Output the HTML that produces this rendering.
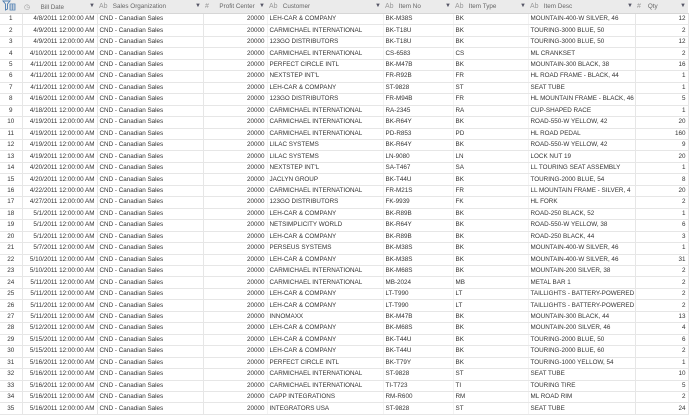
<!DOCTYPE html><html><head><style>
body{margin:0;width:690px;height:416px;overflow:hidden;background:#fff;font-family:"Liberation Sans",sans-serif;}
table{border-collapse:collapse;table-layout:fixed;width:688px;position:absolute;top:0;left:0}
td{height:10.46px;padding:0 2px;font-size:6.3px;color:#333;border-bottom:1px solid #e6e6e6;border-right:1px solid #e6e6e6;white-space:nowrap;overflow:hidden;line-height:10px}
td:nth-child(1){text-align:center}td:nth-child(2){text-align:right}td:nth-child(4){text-align:right}td:nth-child(9){text-align:right}
td:nth-child(4),td:nth-child(5),td:nth-child(6),td:nth-child(7){border-right:1px solid #f3f3f3}
th{height:12px;background:#ebebeb;font-weight:normal;font-size:6.3px;color:#666;text-align:left;padding:0 2px;border-bottom:1px solid #d6d6d6;white-space:nowrap;overflow:hidden}
.a{color:#999;font-size:7px}.v{color:#556;font-size:6px;float:right}
</style></head><body>
<table>
<colgroup><col style="width:22px"><col style="width:75px"><col style="width:106px"><col style="width:64px"><col style="width:116px"><col style="width:70px"><col style="width:75px"><col style="width:107px"><col style="width:53px"></colgroup>
<tr><th><svg width="14" height="11" viewBox="0 0 14 11"><path d="M1 1h7l-2.5 3v5l-2 1V4z" fill="none" stroke="#4a7bb0" stroke-width="0.9"/><rect x="8" y="4" width="5" height="6" fill="none" stroke="#4a7bb0" stroke-width="0.8"/><path d="M8 6h5M8 8h5M10.5 4v6" stroke="#4a7bb0" stroke-width="0.6"/></svg></th>
<th><span class="a">&#9719;</span>&nbsp;&nbsp;&nbsp;&nbsp;&nbsp;&nbsp;Bill Date<span class="v">&#9660;</span></th>
<th><span class="a">Ab</span>&nbsp;&nbsp;&nbsp;Sales Organization<span class="v">&#9660;</span></th>
<th><span class="a">#</span>&nbsp;&nbsp;&nbsp;&nbsp;&nbsp;&nbsp;Profit Center<span class="v">&#9660;</span></th>
<th><span class="a">Ab</span>&nbsp;&nbsp;&nbsp;Customer<span class="v">&#9660;</span></th>
<th><span class="a">Ab</span>&nbsp;&nbsp;&nbsp;Item No<span class="v">&#9660;</span></th>
<th><span class="a">Ab</span>&nbsp;&nbsp;&nbsp;Item Type<span class="v">&#9660;</span></th>
<th><span class="a">Ab</span>&nbsp;&nbsp;&nbsp;Item Desc<span class="v">&#9660;</span></th>
<th><span class="a">#</span>&nbsp;&nbsp;&nbsp;&nbsp;Qty<span class="v">&#9660;</span></th></tr>
<tr><td>1</td><td>4/8/2011 12:00:00 AM</td><td>CND - Canadian Sales</td><td>20000</td><td>LEH-CAR &amp; COMPANY</td><td>BK-M38S</td><td>BK</td><td>MOUNTAIN-400-W SILVER, 46</td><td>12</td></tr>
<tr><td>2</td><td>4/9/2011 12:00:00 AM</td><td>CND - Canadian Sales</td><td>20000</td><td>CARMICHAEL INTERNATIONAL</td><td>BK-T18U</td><td>BK</td><td>TOURING-3000 BLUE, 50</td><td>2</td></tr>
<tr><td>3</td><td>4/9/2011 12:00:00 AM</td><td>CND - Canadian Sales</td><td>20000</td><td>123GO DISTRIBUTORS</td><td>BK-T18U</td><td>BK</td><td>TOURING-3000 BLUE, 50</td><td>12</td></tr>
<tr><td>4</td><td>4/10/2011 12:00:00 AM</td><td>CND - Canadian Sales</td><td>20000</td><td>CARMICHAEL INTERNATIONAL</td><td>CS-6583</td><td>CS</td><td>ML CRANKSET</td><td>2</td></tr>
<tr><td>5</td><td>4/11/2011 12:00:00 AM</td><td>CND - Canadian Sales</td><td>20000</td><td>PERFECT CIRCLE INTL</td><td>BK-M47B</td><td>BK</td><td>MOUNTAIN-300 BLACK, 38</td><td>16</td></tr>
<tr><td>6</td><td>4/11/2011 12:00:00 AM</td><td>CND - Canadian Sales</td><td>20000</td><td>NEXTSTEP INT'L</td><td>FR-R92B</td><td>FR</td><td>HL ROAD FRAME - BLACK, 44</td><td>1</td></tr>
<tr><td>7</td><td>4/11/2011 12:00:00 AM</td><td>CND - Canadian Sales</td><td>20000</td><td>LEH-CAR &amp; COMPANY</td><td>ST-9828</td><td>ST</td><td>SEAT TUBE</td><td>1</td></tr>
<tr><td>8</td><td>4/16/2011 12:00:00 AM</td><td>CND - Canadian Sales</td><td>20000</td><td>123GO DISTRIBUTORS</td><td>FR-M94B</td><td>FR</td><td>HL MOUNTAIN FRAME - BLACK, 46</td><td>5</td></tr>
<tr><td>9</td><td>4/18/2011 12:00:00 AM</td><td>CND - Canadian Sales</td><td>20000</td><td>CARMICHAEL INTERNATIONAL</td><td>RA-2345</td><td>RA</td><td>CUP-SHAPED RACE</td><td>1</td></tr>
<tr><td>10</td><td>4/19/2011 12:00:00 AM</td><td>CND - Canadian Sales</td><td>20000</td><td>CARMICHAEL INTERNATIONAL</td><td>BK-R64Y</td><td>BK</td><td>ROAD-550-W YELLOW, 42</td><td>20</td></tr>
<tr><td>11</td><td>4/19/2011 12:00:00 AM</td><td>CND - Canadian Sales</td><td>20000</td><td>CARMICHAEL INTERNATIONAL</td><td>PD-R853</td><td>PD</td><td>HL ROAD PEDAL</td><td>160</td></tr>
<tr><td>12</td><td>4/19/2011 12:00:00 AM</td><td>CND - Canadian Sales</td><td>20000</td><td>LILAC SYSTEMS</td><td>BK-R64Y</td><td>BK</td><td>ROAD-550-W YELLOW, 42</td><td>9</td></tr>
<tr><td>13</td><td>4/19/2011 12:00:00 AM</td><td>CND - Canadian Sales</td><td>20000</td><td>LILAC SYSTEMS</td><td>LN-9080</td><td>LN</td><td>LOCK NUT 19</td><td>20</td></tr>
<tr><td>14</td><td>4/20/2011 12:00:00 AM</td><td>CND - Canadian Sales</td><td>20000</td><td>NEXTSTEP INT'L</td><td>SA-T467</td><td>SA</td><td>LL TOURING SEAT ASSEMBLY</td><td>1</td></tr>
<tr><td>15</td><td>4/20/2011 12:00:00 AM</td><td>CND - Canadian Sales</td><td>20000</td><td>JACLYN GROUP</td><td>BK-T44U</td><td>BK</td><td>TOURING-2000 BLUE, 54</td><td>8</td></tr>
<tr><td>16</td><td>4/22/2011 12:00:00 AM</td><td>CND - Canadian Sales</td><td>20000</td><td>CARMICHAEL INTERNATIONAL</td><td>FR-M21S</td><td>FR</td><td>LL MOUNTAIN FRAME - SILVER, 4</td><td>20</td></tr>
<tr><td>17</td><td>4/27/2011 12:00:00 AM</td><td>CND - Canadian Sales</td><td>20000</td><td>123GO DISTRIBUTORS</td><td>FK-9939</td><td>FK</td><td>HL FORK</td><td>2</td></tr>
<tr><td>18</td><td>5/1/2011 12:00:00 AM</td><td>CND - Canadian Sales</td><td>20000</td><td>LEH-CAR &amp; COMPANY</td><td>BK-R89B</td><td>BK</td><td>ROAD-250 BLACK, 52</td><td>1</td></tr>
<tr><td>19</td><td>5/1/2011 12:00:00 AM</td><td>CND - Canadian Sales</td><td>20000</td><td>NETSIMPLICITY WORLD</td><td>BK-R64Y</td><td>BK</td><td>ROAD-550-W YELLOW, 38</td><td>6</td></tr>
<tr><td>20</td><td>5/1/2011 12:00:00 AM</td><td>CND - Canadian Sales</td><td>20000</td><td>LEH-CAR &amp; COMPANY</td><td>BK-R89B</td><td>BK</td><td>ROAD-250 BLACK, 44</td><td>3</td></tr>
<tr><td>21</td><td>5/7/2011 12:00:00 AM</td><td>CND - Canadian Sales</td><td>20000</td><td>PERSEUS SYSTEMS</td><td>BK-M38S</td><td>BK</td><td>MOUNTAIN-400-W SILVER, 46</td><td>1</td></tr>
<tr><td>22</td><td>5/10/2011 12:00:00 AM</td><td>CND - Canadian Sales</td><td>20000</td><td>LEH-CAR &amp; COMPANY</td><td>BK-M38S</td><td>BK</td><td>MOUNTAIN-400-W SILVER, 46</td><td>31</td></tr>
<tr><td>23</td><td>5/10/2011 12:00:00 AM</td><td>CND - Canadian Sales</td><td>20000</td><td>CARMICHAEL INTERNATIONAL</td><td>BK-M68S</td><td>BK</td><td>MOUNTAIN-200 SILVER, 38</td><td>2</td></tr>
<tr><td>24</td><td>5/11/2011 12:00:00 AM</td><td>CND - Canadian Sales</td><td>20000</td><td>CARMICHAEL INTERNATIONAL</td><td>MB-2024</td><td>MB</td><td>METAL BAR 1</td><td>2</td></tr>
<tr><td>25</td><td>5/11/2011 12:00:00 AM</td><td>CND - Canadian Sales</td><td>20000</td><td>LEH-CAR &amp; COMPANY</td><td>LT-T990</td><td>LT</td><td>TAILLIGHTS - BATTERY-POWERED</td><td>2</td></tr>
<tr><td>26</td><td>5/11/2011 12:00:00 AM</td><td>CND - Canadian Sales</td><td>20000</td><td>LEH-CAR &amp; COMPANY</td><td>LT-T990</td><td>LT</td><td>TAILLIGHTS - BATTERY-POWERED</td><td>2</td></tr>
<tr><td>27</td><td>5/11/2011 12:00:00 AM</td><td>CND - Canadian Sales</td><td>20000</td><td>INNOMAXX</td><td>BK-M47B</td><td>BK</td><td>MOUNTAIN-300 BLACK, 44</td><td>13</td></tr>
<tr><td>28</td><td>5/12/2011 12:00:00 AM</td><td>CND - Canadian Sales</td><td>20000</td><td>LEH-CAR &amp; COMPANY</td><td>BK-M68S</td><td>BK</td><td>MOUNTAIN-200 SILVER, 46</td><td>4</td></tr>
<tr><td>29</td><td>5/15/2011 12:00:00 AM</td><td>CND - Canadian Sales</td><td>20000</td><td>LEH-CAR &amp; COMPANY</td><td>BK-T44U</td><td>BK</td><td>TOURING-2000 BLUE, 50</td><td>6</td></tr>
<tr><td>30</td><td>5/15/2011 12:00:00 AM</td><td>CND - Canadian Sales</td><td>20000</td><td>LEH-CAR &amp; COMPANY</td><td>BK-T44U</td><td>BK</td><td>TOURING-2000 BLUE, 60</td><td>2</td></tr>
<tr><td>31</td><td>5/16/2011 12:00:00 AM</td><td>CND - Canadian Sales</td><td>20000</td><td>PERFECT CIRCLE INTL</td><td>BK-T79Y</td><td>BK</td><td>TOURING-1000 YELLOW, 54</td><td>1</td></tr>
<tr><td>32</td><td>5/16/2011 12:00:00 AM</td><td>CND - Canadian Sales</td><td>20000</td><td>CARMICHAEL INTERNATIONAL</td><td>ST-9828</td><td>ST</td><td>SEAT TUBE</td><td>10</td></tr>
<tr><td>33</td><td>5/16/2011 12:00:00 AM</td><td>CND - Canadian Sales</td><td>20000</td><td>CARMICHAEL INTERNATIONAL</td><td>TI-T723</td><td>TI</td><td>TOURING TIRE</td><td>5</td></tr>
<tr><td>34</td><td>5/16/2011 12:00:00 AM</td><td>CND - Canadian Sales</td><td>20000</td><td>CAPP INTEGRATIONS</td><td>RM-R600</td><td>RM</td><td>ML ROAD RIM</td><td>2</td></tr>
<tr><td>35</td><td>5/16/2011 12:00:00 AM</td><td>CND - Canadian Sales</td><td>20000</td><td>INTEGRATORS USA</td><td>ST-9828</td><td>ST</td><td>SEAT TUBE</td><td>24</td></tr>
</table>
</body></html>
